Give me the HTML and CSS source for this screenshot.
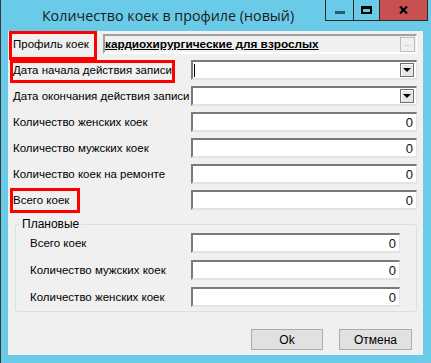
FILE: index.html
```html
<!DOCTYPE html>
<html lang="ru">
<head>
    <meta charset="UTF-8">
    <title>Количество коек в профиле (новый)</title>
    <link rel="stylesheet" href="styles.css">
</head>
<body>
    <div class="window">
        <div class="titlebar">
            <div class="title">Количество коек в профиле (новый)</div>
            <div class="caption-btns">
                <span class="cbtn min"><i></i></span>
                <span class="cbtn max"><i></i></span>
                <span class="cbtn close">
                    <svg width="9" height="8" viewBox="0 0 9 8"><path d="M1 0.5 L8 7.5 M8 0.5 L1 7.5" stroke="#000" stroke-width="2.2" fill="none"/></svg>
                </span>
            </div>
        </div>

        <div class="client">
            <div class="rows">
                <div class="row">
                    <span class="lbl lbl-short marked mark-profile">Профиль коек</span>
                    <div class="field field-readonly">
                        <span class="link">кардиохирургические для взрослых</span>
                        <span class="dots">...</span>
                    </div>
                </div>
                <div class="row">
                    <span class="lbl marked mark-start">Дата начала действия записи</span>
                    <div class="field combo">
                        <span class="caret"></span>
                        <span class="drop"><i></i></span>
                    </div>
                </div>
                <div class="row">
                    <span class="lbl">Дата окончания действия записи</span>
                    <div class="field combo">
                        <span class="drop"><i></i></span>
                    </div>
                </div>
                <div class="row">
                    <span class="lbl">Количество женских коек</span>
                    <div class="field num">0</div>
                </div>
                <div class="row">
                    <span class="lbl">Количество мужских коек</span>
                    <div class="field num">0</div>
                </div>
                <div class="row">
                    <span class="lbl">Количество коек на ремонте</span>
                    <div class="field num">0</div>
                </div>
                <div class="row">
                    <span class="lbl marked mark-total">Всего коек</span>
                    <div class="field num">0</div>
                </div>
            </div>

            <fieldset class="group">
                <legend>Плановые</legend>
                <div class="row">
                    <span class="lbl">Всего коек</span>
                    <div class="field num">0</div>
                </div>
                <div class="row">
                    <span class="lbl">Количество мужских коек</span>
                    <div class="field num">0</div>
                </div>
                <div class="row">
                    <span class="lbl">Количество женских коек</span>
                    <div class="field num">0</div>
                </div>
            </fieldset>

            <div class="actions">
                <button class="btn btn-ok">Ok</button>
                <button class="btn btn-cancel">Отмена</button>
            </div>
        </div>
    </div>
</body>
</html>
```

FILE: styles.css
```css
*, *::before, *::after {
    margin: 0;
    padding: 0;
    box-sizing: border-box;
}

body {
    font-family: "Liberation Sans", Arial, sans-serif;
    font-size: 11.5px;
    color: #000;
    background: #6acbe9;
}

.window {
    width: 431px;
    height: 363px;
    background: #6acbe9;
    border-left: 1px solid #3a3a3a;
    display: flex;
    flex-direction: column;
}

/* title bar */
.titlebar {
    height: 31px;
    display: flex;
    align-items: flex-start;
    padding-right: 3px;
}

.title {
    flex: 1;
    text-align: center;
    padding: 6px 0 0 10px;
    font-family: "Open Sans", "Noto Sans", sans-serif;
    font-size: 14.3px;
    line-height: 20px;
    color: #1b1b1b;
}

.caption-btns {
    display: flex;
}

.cbtn {
    height: 21px;
    display: flex;
    align-items: center;
    justify-content: center;
    border-left: 1px solid #2b2b2b;
    border-bottom: 1px solid #2b2b2b;
}

.cbtn.min { width: 28px; }
.cbtn.max { width: 26px; }

.cbtn.close {
    width: 49px;
    background: #c75050;
    border-right: 1px solid #2b2b2b;
}

.cbtn.min i {
    width: 10px;
    height: 3px;
    margin-top: 4px;
    background: #2a5b72;
}

.cbtn.max i {
    width: 11px;
    height: 8px;
    border: 2px solid #000;
    border-top-width: 3px;
}

/* client area */
.client {
    flex: 1;
    margin: 0 8px 8px 7px;
    background: #f0f0f0;
    display: flex;
    flex-direction: column;
}

.rows {
    display: flex;
    flex-direction: column;
    gap: 6px;
    padding: 3px 0 0 5px;
}

.row {
    display: flex;
    align-items: center;
    height: 20px;
}

.lbl {
    width: 178px;
    white-space: nowrap;
    position: relative;
}

.lbl-short {
    width: 90px;
}

/* red annotation frames */
.marked::after {
    content: "";
    position: absolute;
    border: 3px solid #ff0000;
}

.mark-profile::after { left: -4px; top: -7px; width: 88px; height: 29px; }
.mark-start::after   { left: -3px; top: -4px; width: 165px; height: 23px; }
.mark-total::after   { left: -3px; top: -6px; width: 70px; height: 25px; }

.field {
    width: 226px;
    height: 20px;
    background: #fff;
    border-style: solid;
    border-width: 2px 1px 2px 2px;
    border-color: #7a7a7a #e3e3e3 #e3e3e3 #7a7a7a;
    display: flex;
    align-items: center;
}

.field-readonly {
    flex: 1;
    margin-right: 6px;
    background: #f0f0f0;
    border-color: #a0a0a0 #ffffff #ffffff #a0a0a0;
    justify-content: space-between;
}

.link {
    font-weight: bold;
    font-size: 11.8px;
    text-decoration: underline;
    color: #000;
}

.dots {
    width: 15px;
    height: 15px;
    margin-right: 1px;
    border: 1px solid #bdbdbd;
    color: #b0b0b0;
    font-size: 9px;
    line-height: 11px;
    text-align: center;
}

.num {
    justify-content: flex-end;
    padding-right: 3px;
    font-size: 13px;
    color: #111;
}

.combo {
    justify-content: flex-end;
    padding-right: 2px;
}

.caret {
    width: 1px;
    height: 13px;
    background: #000;
    margin-right: auto;
    margin-left: 1px;
}

.drop {
    width: 14px;
    height: 14px;
    background: #e6e6e6;
    border: 1px solid #6e6e6e;
    box-shadow: inset 1px 1px 0 #fff;
    display: flex;
    align-items: center;
    justify-content: center;
}

.drop i {
    width: 0;
    height: 0;
    border-left: 4px solid transparent;
    border-right: 4px solid transparent;
    border-top: 4px solid #000;
}

/* planned group */
.group {
    margin: 7px 6px 0 7px;
    padding: 2px 16px 4px 14px;
    border: 1px solid #d9dfe3;
    border-radius: 3px;
    display: flex;
    flex-direction: column;
    gap: 7px;
}

.group legend {
    margin-left: -10px;
    padding: 0 2px;
    line-height: 14px;
    font-size: 12px;
}

.group .lbl {
    width: 161px;
}

.group .field {
    width: 209px;
}

/* buttons */
.actions {
    display: flex;
    justify-content: flex-end;
    gap: 16px;
    margin-top: 17px;
    padding-right: 11px;
}

.btn {
    height: 21px;
    background: #e1e1e1;
    border: 1px solid #adadad;
    font-family: "Liberation Sans", Arial, sans-serif;
    font-size: 12px;
    color: #000;
}

.btn-ok { width: 72px; }
.btn-cancel { width: 73px; }
```
